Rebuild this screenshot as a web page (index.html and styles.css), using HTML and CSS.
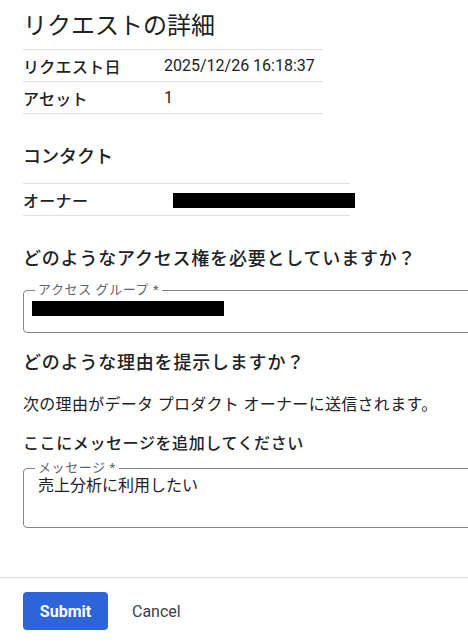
FILE: index.html
```html
<!DOCTYPE html>
<html lang="ja">
<head>
<meta charset="utf-8">
<link rel="stylesheet" href="styles.css">
</head>
<body>
<main class="page">
  <h1 class="title">リクエストの詳細</h1>
  <div class="table details">
    <div class="row"><span class="key">リクエスト日</span><span class="val">2025/12/26 16:18:37</span></div>
    <div class="row"><span class="key">アセット</span><span class="val">1</span></div>
  </div>

  <h2 class="sub">コンタクト</h2>
  <div class="table contact">
    <div class="row"><span class="key">オーナー</span><span class="val"><span class="redact redact-owner"></span></span></div>
  </div>

  <h2 class="question q1">どのようなアクセス権を必要としていますか？</h2>
  <div class="field field-access">
    <span class="field-label">アクセス グループ *</span>
    <div class="field-value"><span class="redact redact-group"></span></div>
  </div>

  <h2 class="question q2">どのような理由を提示しますか？</h2>
  <p class="note">次の理由がデータ プロダクト オーナーに送信されます。</p>
  <h3 class="msg-head">ここにメッセージを追加してください</h3>
  <div class="field field-message">
    <span class="field-label">メッセージ *</span>
    <div class="field-text">売上分析に利用したい</div>
  </div>
</main>
<footer class="actions">
  <button class="btn btn-primary">Submit</button>
  <button class="btn btn-text">Cancel</button>
</footer>
</body>
</html>
```

FILE: styles.css
```css
* { box-sizing: border-box; }
html, body {
  margin: 0;
  padding: 0;
  background: #fff;
  overflow: hidden;
}
body {
  width: 468px;
  height: 644px;
  font-family: "Roboto", "Noto Sans CJK JP", sans-serif;
  color: #202124;
}
.page {
  padding: 0 0 0 23px;
}
.title {
  margin: 11px 0 0;
  font-size: 24px;
  line-height: 30px;
  font-weight: 400;
  color: #202124;
}
.table {
  border-bottom: 1px solid #e0e0e0;
}
.details {
  margin-top: 8px;
  width: 300px;
}
.contact {
  margin-top: 14px;
  width: 327px;
}
.row {
  display: grid;
  height: 32px;
  align-items: center;
  border-top: 1px solid #e0e0e0;
  font-size: 16px;
}
.details .row { grid-template-columns: 141px 1fr; }
.contact .row { grid-template-columns: 150px 1fr; }
.key { font-weight: 500; color: #202124; letter-spacing: 0.3px; }
.val { color: #202124; display: flex; align-items: center; }
.redact {
  display: block;
  background: #000;
}
.redact-owner {
  width: 182px;
  height: 15px;
  margin-top: 2px;
}
.sub {
  margin: 31px 0 0;
  font-size: 18px;
  line-height: 24px;
  font-weight: 500;
}
.question {
  margin: 31px 0 0;
  font-size: 18px;
  line-height: 24px;
  font-weight: 500;
  letter-spacing: 0.8px;
}
.q2 { margin-top: 18px; }
.field {
  position: relative;
  margin: 19px 0 0;
  padding: 0 14px;
  border: 1px solid #80868b;
  border-radius: 4px;
  width: 480px;
}
.field-label {
  position: absolute;
  top: -9px;
  left: 11px;
  padding: 0 3px;
  background: #fff;
  font-size: 13px;
  line-height: 16px;
  color: #5f6368;
  letter-spacing: 0.6px;
}
.field-access { height: 43px; }
.field-value { padding-top: 10px; }
.redact-group {
  width: 192px;
  height: 15px;
  margin-left: -6px;
}
.note {
  margin: 18px 0 0;
  font-size: 16px;
  line-height: 24px;
  letter-spacing: 0.3px;
  color: #202124;
}
.msg-head {
  margin: 15px 0 0;
  font-size: 16px;
  line-height: 24px;
  font-weight: 500;
  letter-spacing: 0.6px;
}
.field-message {
  margin-top: 12px;
  height: 60px;
}
.field-text {
  font-size: 16px;
  line-height: 22px;
  padding-top: 6px;
}
.actions {
  margin-top: 49px;
  border-top: 1px solid #dadce0;
  padding: 14px 0 0 23px;
  display: flex;
  gap: 8px;
  align-items: center;
}
.btn {
  font-family: "Roboto", "Noto Sans CJK JP", sans-serif;
  font-size: 16px;
  height: 38px;
  border: none;
  border-radius: 4px;
  cursor: pointer;
}
.btn-primary {
  width: 85px;
  background: #2d64d8;
  color: #fff;
  font-weight: 700;
}
.btn-text {
  background: none;
  color: #3c4043;
  padding: 0 16px;
  font-weight: 400;
}
```
